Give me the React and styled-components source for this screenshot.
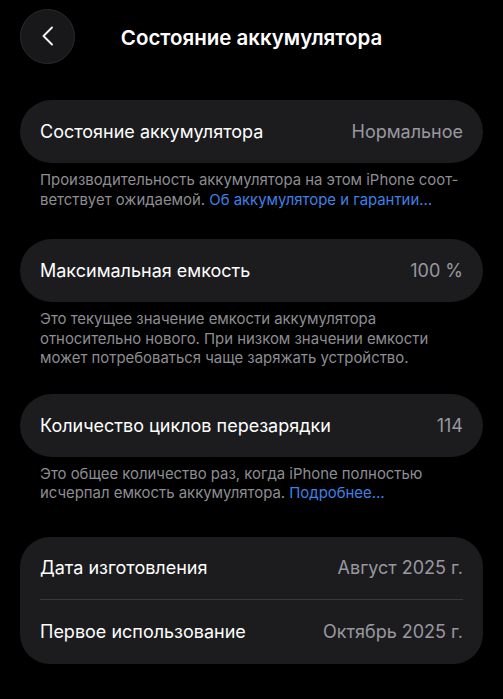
import React from "react";
import styled, { createGlobalStyle } from "styled-components";

const GlobalStyle = createGlobalStyle`
  html, body {
    margin: 0;
    padding: 0;
    background: #000;
  }
  body {
    font-family: Inter, "Noto Sans", "Liberation Sans", sans-serif;
    color: #fff;
    -webkit-font-smoothing: antialiased;
  }
`;

const Screen = styled.div`
  min-height: 699px;
  background: #000;
  padding: 8px 20px 0;
  box-sizing: border-box;
`;

const Header = styled.div`
  display: grid;
  grid-template-columns: 56px 1fr 56px;
  align-items: center;
  height: 56px;
  margin-bottom: 36px;
`;

const BackButton = styled.button`
  width: 55px;
  height: 55px;
  border-radius: 50%;
  border: 1px solid #2a2a2c;
  background: #18181a;
  display: flex;
  align-items: center;
  justify-content: center;
  padding: 0;
  cursor: pointer;
`;

const Title = styled.h1`
  margin: 0;
  font-size: 20.5px;
  font-weight: 600;
  text-align: center;
  letter-spacing: 0;
  padding-top: 2px;
`;

const Card = styled.div`
  background: #1c1c1e;
  border-radius: ${(p) => (p.$multi ? "30px" : "32px")};
  padding: 0 20px;
`;

const Row = styled.div`
  display: flex;
  align-items: center;
  justify-content: space-between;
  height: ${(p) => p.$height || 63}px;
  font-size: 18px;
  & + & {
    border-top: 1px solid #38383a;
  }
`;

const Label = styled.span`
  color: #fff;
`;

const Value = styled.span`
  color: #98989e;
`;

const Footnote = styled.p`
  margin: 8px 0 ${(p) => p.$after || 29}px;
  padding: 0 20px;
  font-size: 14.9px;
  line-height: 19.5px;
  color: #8d8d92;
`;

const Link = styled.a`
  color: #3f80e4;
  text-decoration: none;
`;

const Chevron = () => (
  <svg width="14" height="20" viewBox="0 0 14 20" fill="none">
    <path
      d="M11 1.5 L2.5 10 L11 18.5"
      stroke="#f2f2f2"
      strokeWidth="1.9"
      strokeLinecap="round"
      strokeLinejoin="round"
    />
  </svg>
);

export default function App() {
  return (
    <>
      <GlobalStyle />
      <Screen>
        <Header>
          <BackButton aria-label="Назад">
            <Chevron />
          </BackButton>
          <Title>Состояние аккумулятора</Title>
          <span />
        </Header>

        <Card>
          <Row>
            <Label>Состояние аккумулятора</Label>
            <Value>Нормальное</Value>
          </Row>
        </Card>
        <Footnote>
          Производительность аккумулятора на этом iPhone соот-
          <br />
          ветствует ожидаемой. <Link href="#">Об аккумуляторе и гарантии…</Link>
        </Footnote>

        <Card>
          <Row>
            <Label>Максимальная емкость</Label>
            <Value>100 %</Value>
          </Row>
        </Card>
        <Footnote $after={25}>
          Это текущее значение емкости аккумулятора
          <br />
          относительно нового. При низком значении емкости
          <br />
          может потребоваться чаще заряжать устройство.
        </Footnote>

        <Card>
          <Row>
            <Label>Количество циклов перезарядки</Label>
            <Value>114</Value>
          </Row>
        </Card>
        <Footnote $after={33}>
          Это общее количество раз, когда iPhone полностью
          <br />
          исчерпал емкость аккумулятора. <Link href="#">Подробнее…</Link>
        </Footnote>

        <Card $multi>
          <Row $height={62}>
            <Label>Дата изготовления</Label>
            <Value>Август 2025 г.</Value>
          </Row>
          <Row $height={64}>
            <Label>Первое использование</Label>
            <Value>Октябрь 2025 г.</Value>
          </Row>
        </Card>
      </Screen>
    </>
  );
}
